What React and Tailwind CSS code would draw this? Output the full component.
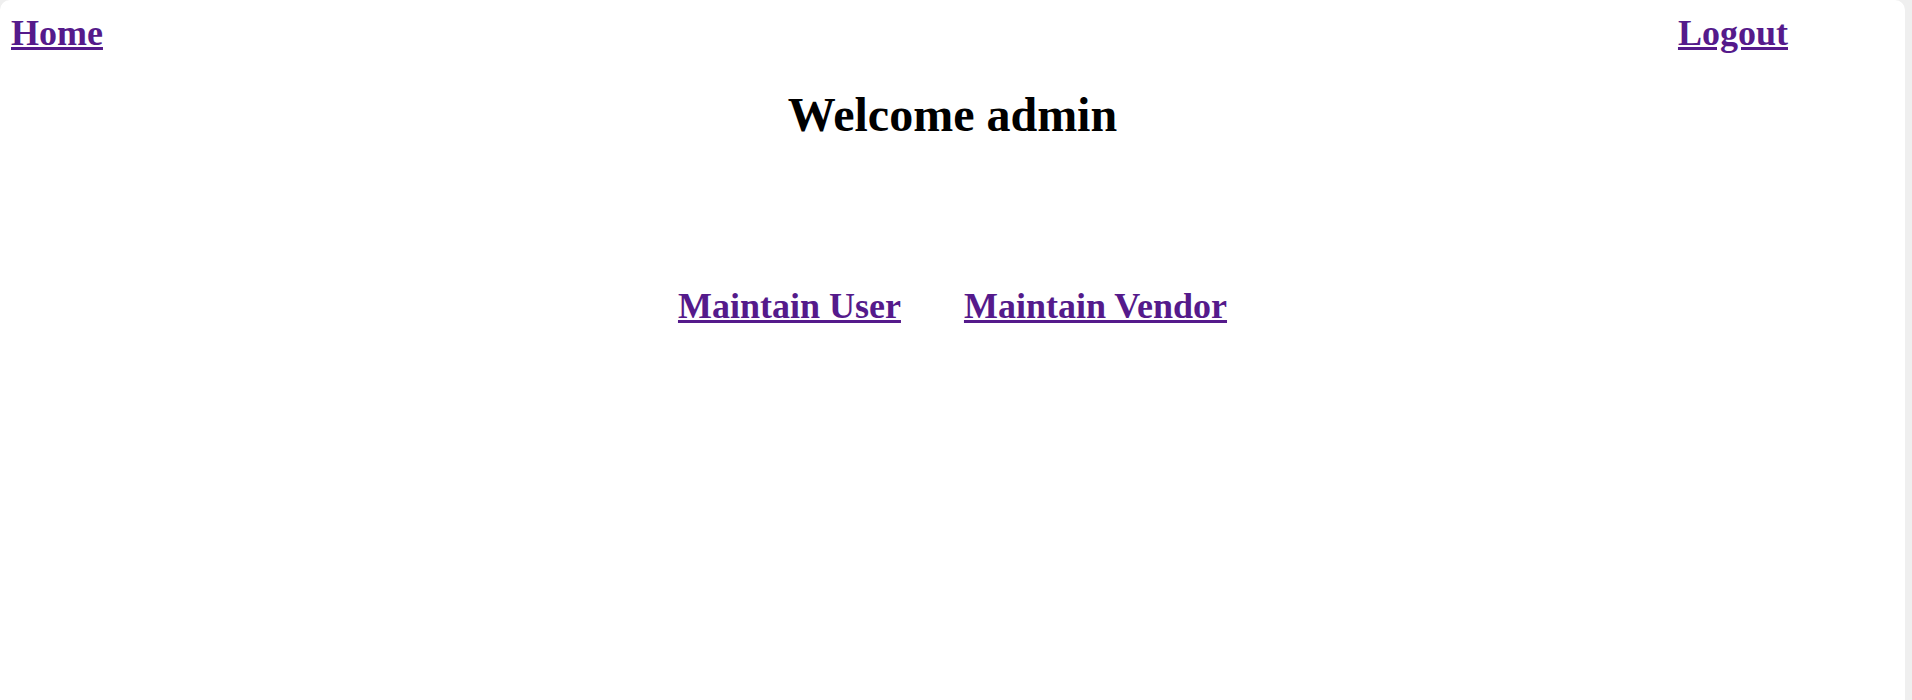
export default function App() {
  const font = { fontFamily: '"Liberation Serif", "Times New Roman", serif' };
  return (
    <div className="min-h-[700px] h-[700px] bg-[#efefef] pr-[7px] overflow-hidden" style={font}>
      <div className="h-full bg-white rounded-t-[10px]">
        <div className="flex justify-between pl-[11px] pr-[117px] pt-[13px]">
          <a href="#" className="text-[36px] font-bold leading-[41px] text-[#551a8b] underline">Home</a>
          <a href="#" className="text-[36px] font-bold leading-[41px] text-[#551a8b] underline">Logout</a>
        </div>
        <h1 className="mt-[33px] text-center text-[48px] font-bold leading-[55px] text-black">Welcome admin</h1>
        <div className="mt-[144px] flex justify-center gap-[63px]">
          <a href="#" className="text-[36px] font-bold leading-[41px] text-[#551a8b] underline">Maintain User</a>
          <a href="#" className="text-[36px] font-bold leading-[41px] text-[#551a8b] underline">Maintain Vendor</a>
        </div>
      </div>
    </div>
  );
}
